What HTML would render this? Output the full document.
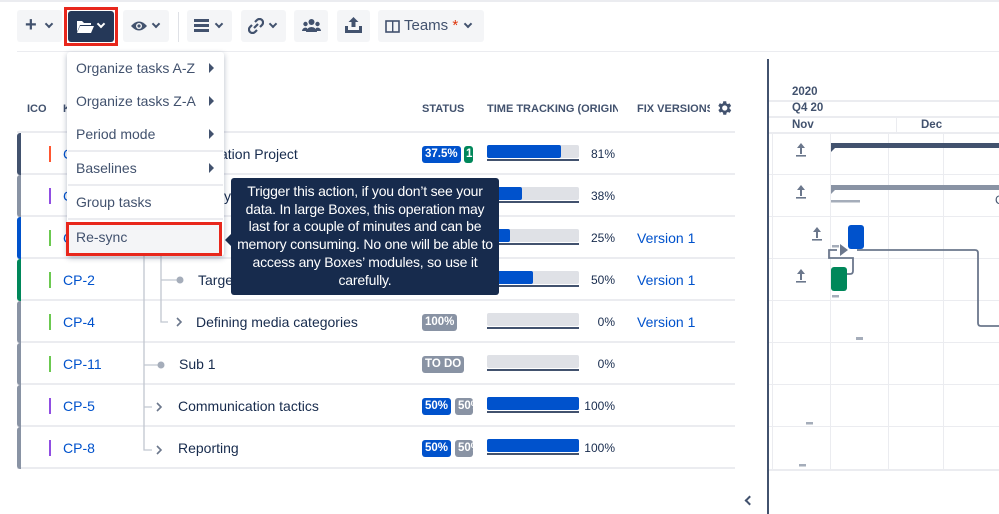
<!DOCTYPE html>
<html><head><meta charset="utf-8"><style>
*{box-sizing:border-box;margin:0;padding:0}
body{width:999px;height:514px;overflow:hidden;background:#fff;font-family:"Liberation Sans",sans-serif;color:#172b4d;position:relative}
.a{position:absolute}
.btn{position:absolute;top:10px;height:32px;background:#f4f5f7;border-radius:3px}
.chev{position:absolute;width:6px;height:6px;border-right:2px solid #42526e;border-bottom:2px solid #42526e;transform:rotate(45deg)}
.hd{position:absolute;top:103px;font-size:11px;font-weight:bold;color:#42526e}
.row{position:absolute;left:17px;width:718px;height:42px;border-bottom:2px solid #ebecf0}
.lb{position:absolute;left:0;top:0;width:4px;height:42px;border-radius:3px 0 0 3px}
.cb{position:absolute;left:32px;top:13px;width:2px;height:16px}
.key{position:absolute;left:46px;top:13px;font-size:14px;color:#0052cc}
.name{position:absolute;top:13px;font-size:14px;color:#172b4d}
.pill{position:absolute;top:13px;height:17px;border-radius:3px;color:#fff;font-size:11.5px;font-weight:bold;padding:2px 3px;overflow:hidden;white-space:nowrap}
.tt{position:absolute;left:470px;top:12px;width:92px;height:16px}
.tt .bg{position:absolute;left:0;top:0;width:92px;height:13px;background:#dfe1e6;border-radius:2px}
.tt .fg{position:absolute;left:0;top:0;height:13px;background:#0052cc;border-radius:2px}
.tt .ul{position:absolute;left:0;top:14px;width:92px;height:2px;background:#42526e}
.pct{position:absolute;top:14px;font-size:12px;color:#172b4d;text-align:right;width:40px;left:558px}
.ver{position:absolute;left:620px;top:13px;font-size:14px;color:#0052cc}
.mi{position:absolute;left:76px;font-size:14px;color:#42526e}
.tri{position:absolute;left:209px;width:0;height:0;border-top:5px solid transparent;border-bottom:5px solid transparent;border-left:5px solid #42526e}
.sep{position:absolute;left:68px;width:155px;height:2px;background:#ebecf0}
.gl{position:absolute;background:#ebecf0}
.gh{position:absolute;font-size:11.5px;font-weight:bold;color:#42526e}
</style></head><body>
<div class="a" style="left:0;top:0;width:999px;height:2px;background:#ebecf0"></div>
<div class="btn" style="left:17px;width:45px"><div class="a" style="left:8px;top:6px;font-size:20px;font-weight:bold;color:#42526e;line-height:18px">+</div><div class="chev" style="left:29px;top:11px"></div></div>
<div class="a" style="left:64px;top:7px;width:54px;height:39px;border:3px solid #e8271c"></div>
<div class="btn" style="left:68px;width:46px;background:#253858;top:11px;height:31px">
<svg class="a" style="left:8px;top:9px" width="18" height="13" viewBox="0 0 18 13"><path d="M1 1h5l2 2h7v2H4L1 12z" fill="#fff"/><path d="M4 6h14l-3 7H1z" fill="#fff"/></svg>
<div class="chev" style="left:30px;top:10px;border-color:#fff"></div></div>
<div class="btn" style="left:123px;width:46px"><svg class="a" style="left:7px;top:10px" width="18" height="12" viewBox="0 0 18 12"><path d="M1 6Q9-3 17 6Q9 15 1 6z" fill="#42526e"/><circle cx="9" cy="6" r="3" fill="#f4f5f7"/><circle cx="9" cy="6" r="1.6" fill="#42526e"/></svg><div class="chev" style="left:30px;top:11px"></div></div>
<div class="a" style="left:178px;top:12px;width:1px;height:30px;background:#dfe1e6"></div>
<div class="btn" style="left:187px;width:45px"><svg class="a" style="left:7px;top:9px" width="15" height="13"><rect x="0" y="0" width="15" height="3" fill="#42526e"/><rect x="0" y="5" width="15" height="3" fill="#42526e"/><rect x="0" y="10" width="15" height="3" fill="#42526e"/></svg><div class="chev" style="left:29px;top:11px"></div></div>
<div class="btn" style="left:241px;width:45px"><svg class="a" style="left:7px;top:8px" width="16" height="16" viewBox="0 0 16 16"><path d="M7 4l2-2a3 3 0 0 1 5 5l-2 2M9 12l-2 2a3 3 0 0 1-5-5l2-2M6 10l4-4" stroke="#42526e" stroke-width="2.2" fill="none"/></svg><div class="chev" style="left:29px;top:11px"></div></div>
<div class="btn" style="left:294px;width:34px"><svg class="a" style="left:8px;top:9px" width="19" height="13"><circle cx="9.5" cy="3" r="3" fill="#42526e"/><circle cx="3.5" cy="5" r="2.2" fill="#42526e"/><circle cx="15.5" cy="5" r="2.2" fill="#42526e"/><path d="M4 13a5.5 5 0 0 1 11 0z" fill="#42526e"/><path d="M0 12a3.5 3.5 0 0 1 5-3v3zM19 12a3.5 3.5 0 0 0-5-3v3z" fill="#42526e"/></svg></div>
<div class="btn" style="left:337px;width:33px"><svg class="a" style="left:8px;top:7px" width="17" height="16" viewBox="0 0 17 16"><path d="M8.5 0l5 5h-3v5h-4V5h-3z" fill="#42526e"/><path d="M0 9h3v4h11V9h3v7H0z" fill="#42526e"/></svg></div>
<div class="btn" style="left:378px;width:106px"><svg class="a" style="left:7px;top:10px" width="15" height="13"><rect x="1" y="1" width="13" height="11" fill="none" stroke="#42526e" stroke-width="1.6"/><rect x="7" y="1" width="1.4" height="11" fill="#42526e"/></svg><div class="a" style="left:26px;top:7px;font-size:15px;color:#42526e">Teams <span style="color:#de350b">*</span></div><div class="chev" style="left:87px;top:11px"></div></div>
<div class="a" style="left:17px;top:51px;width:982px;height:1px;background:#ebecf0"></div>
<div class="hd" style="left:27px">ICO</div><div class="hd" style="left:63px">K</div>
<div class="hd" style="left:422px">STATUS</div>
<div class="hd" style="left:487px;width:131px;overflow:hidden;white-space:nowrap">TIME TRACKING (ORIGINAL</div>
<div class="hd" style="left:637px;width:73px;overflow:hidden;white-space:nowrap">FIX VERSIONS</div>
<svg class="a" style="left:715px;top:99px" width="18" height="18" viewBox="0 0 24 24"><path fill="#42526e" d="M19.4 13a7.5 7.5 0 0 0 0-2l2.1-1.6-2-3.5-2.5 1a7 7 0 0 0-1.7-1L15 3h-4l-.4 2.7a7 7 0 0 0-1.7 1l-2.5-1-2 3.5L6.6 11a7.5 7.5 0 0 0 0 2l-2.1 1.6 2 3.5 2.5-1a7 7 0 0 0 1.7 1L11 21h4l.4-2.7a7 7 0 0 0 1.7-1l2.5 1 2-3.5zM13 15.5a3.5 3.5 0 1 1 0-7 3.5 3.5 0 0 1 0 7z"/></svg>
<div class="a" style="left:17px;top:131px;width:718px;height:2px;background:#ebecf0"></div>
<div class="row" style="top:133px"><div class="lb" style="background:#42526e"></div><div class="cb" style="background:#ff5630"></div><div class="key">C</div><div class="name" style="left:196px">cation Project</div>
<div class="pill" style="left:405px;background:#0052cc">37.5%</div><div class="pill" style="left:447px;width:9px;background:#00875a;padding:2px 2px">1</div>
<div class="tt"><div class="bg"></div><div class="fg" style="width:74px"></div><div class="ul"></div></div><div class="pct">81%</div></div>
<div class="row" style="top:175px"><div class="lb" style="background:#8993a4"></div><div class="cb" style="background:#904ee2"></div><div class="key">C</div><div class="name" style="left:207px">y</div>
<div class="tt"><div class="bg"></div><div class="fg" style="width:35px"></div><div class="ul"></div></div><div class="pct">38%</div></div>
<div class="row" style="top:217px"><div class="lb" style="background:#0052cc"></div><div class="cb" style="background:#6bc950"></div><div class="key">C</div>
<div class="tt"><div class="bg"></div><div class="fg" style="width:23px"></div><div class="ul"></div></div><div class="pct">25%</div><div class="ver">Version 1</div></div>
<div class="row" style="top:259px"><div class="lb" style="background:#00875a"></div><div class="cb" style="background:#6bc950"></div><div class="key">CP-2</div><div class="name" style="left:181px">Targe</div>
<div class="tt"><div class="bg"></div><div class="fg" style="width:46px"></div><div class="ul"></div></div><div class="pct">50%</div><div class="ver">Version 1</div></div>
<div class="row" style="top:301px"><div class="lb" style="background:#8993a4"></div><div class="cb" style="background:#6bc950"></div><div class="key">CP-4</div><div class="name" style="left:179px">Defining media categories</div>
<div class="pill" style="left:405px;background:#8993a4">100%</div>
<div class="tt"><div class="bg"></div><div class="ul"></div></div><div class="pct">0%</div><div class="ver">Version 1</div></div>
<div class="row" style="top:343px"><div class="lb" style="background:#8993a4"></div><div class="cb" style="background:#6bc950"></div><div class="key">CP-11</div><div class="name" style="left:162px">Sub 1</div>
<div class="pill" style="left:405px;background:#8993a4">TO DO</div>
<div class="tt"><div class="bg"></div><div class="ul"></div></div><div class="pct">0%</div></div>
<div class="row" style="top:385px"><div class="lb" style="background:#8993a4"></div><div class="cb" style="background:#904ee2"></div><div class="key">CP-5</div><div class="name" style="left:161px">Communication tactics</div>
<div class="pill" style="left:405px;background:#0052cc">50%</div><div class="pill" style="left:438px;width:18px;background:#8993a4">50%</div>
<div class="tt"><div class="bg"></div><div class="fg" style="width:92px"></div><div class="ul"></div></div><div class="pct">100%</div></div>
<div class="row" style="top:427px"><div class="lb" style="background:#8993a4"></div><div class="cb" style="background:#904ee2"></div><div class="key">CP-8</div><div class="name" style="left:161px">Reporting</div>
<div class="pill" style="left:405px;background:#0052cc">50%</div><div class="pill" style="left:438px;width:18px;background:#8993a4">50%</div>
<div class="tt"><div class="bg"></div><div class="fg" style="width:92px"></div><div class="ul"></div></div><div class="pct">100%</div></div>
<svg class="a" style="left:0;top:0" width="400" height="514"><g stroke="#c1c7d0" stroke-width="1.3" fill="none">
<path d="M144 250V450H152M144 365H158M144 407H152M161 250V322H168M161 280H178"/></g>
<circle cx="161" cy="365" r="3.5" fill="#a5adba"/><circle cx="180" cy="280" r="3.5" fill="#a5adba"/>
<g stroke="#6b778c" stroke-width="1.6" fill="none"><path d="M177 318l4 4-4 4M157 403l4 4-4 4M157 446l4 4-4 4"/></g></svg>
<div class="a" style="left:746px;top:497px;width:7px;height:7px;border-left:2px solid #42526e;border-bottom:2px solid #42526e;transform:rotate(45deg)"></div>
<div class="a" style="left:767px;top:59px;width:2px;height:455px;background:#42526e"></div>
<div class="gh" style="left:792px;top:86px">2020</div>
<div class="gh" style="left:792px;top:102px">Q4 20</div>
<div class="gh" style="left:792px;top:119px">Nov</div>
<div class="gh" style="left:921px;top:119px">Dec</div>
<div class="gl" style="left:769px;top:100px;width:230px;height:2px"></div>
<div class="gl" style="left:769px;top:116px;width:230px;height:2px"></div>
<div class="gl" style="left:769px;top:132px;width:230px;height:2px"></div>
<div class="gl" style="left:896px;top:117px;width:1px;height:16px"></div>
<div class="gl" style="left:772px;top:133px;width:1px;height:337px"></div>
<div class="gl" style="left:830px;top:133px;width:1px;height:337px"></div>
<div class="gl" style="left:888px;top:133px;width:1px;height:337px"></div>
<div class="gl" style="left:943px;top:133px;width:1px;height:337px"></div>
<div class="gl" style="left:769px;top:174px;width:230px;height:1px"></div>
<div class="gl" style="left:769px;top:216px;width:230px;height:1px"></div>
<div class="gl" style="left:769px;top:258px;width:230px;height:1px"></div>
<div class="gl" style="left:769px;top:300px;width:230px;height:1px"></div>
<div class="gl" style="left:769px;top:342px;width:230px;height:1px"></div>
<div class="gl" style="left:769px;top:384px;width:230px;height:1px"></div>
<div class="gl" style="left:769px;top:426px;width:230px;height:1px"></div>
<div class="gl" style="left:769px;top:469px;width:230px;height:2px"></div>
<svg class="a" style="left:769px;top:133px" width="230" height="340">
<g fill="#6b778c"><path d="M32 10l-4 5h3v6h2v-6h3z"/><rect x="27" y="22" width="10" height="1.6"/>
<path d="M32 52l-4 5h3v6h2v-6h3z"/><rect x="27" y="64" width="10" height="1.6"/>
<path d="M48 94l-4 5h3v6h2v-6h3z"/><rect x="43" y="106" width="10" height="1.6"/>
<path d="M32 136l-4 5h3v6h2v-6h3z"/><rect x="27" y="148" width="10" height="1.6"/></g>
<path d="M62 10h168v5H66l-4 4z" fill="#42526e"/>
<path d="M62 52h168v5H66l-4 4z" fill="#8993a4"/>
<rect x="62" y="67" width="29" height="2.5" fill="#a5adba"/>
<path d="M88 117H206q3 0 3 3v70q0 3 3 3h18M68 117h-8v8h24v13q0 3-3 3h-5" stroke="#6b778c" stroke-width="1.8" fill="none"/>
<path d="M71 111l8 6-8 6z" fill="#6b778c"/>
<rect x="79" y="92" width="16" height="24" rx="3" fill="#0052cc"/>
<rect x="62" y="134" width="16" height="24" rx="3" fill="#00875a"/>
<rect x="63" y="112" width="7" height="2.5" fill="#a5adba"/>
<rect x="63" y="162" width="7" height="2.5" fill="#a5adba"/>
<rect x="87" y="204" width="7" height="3" fill="#a5adba"/>
<rect x="37" y="289" width="7" height="2.5" fill="#a5adba"/>
<rect x="30" y="331" width="7" height="2.5" fill="#a5adba"/>
</svg>
<div class="a" style="left:995px;top:193px;font-size:12px;color:#42526e">C</div>
<div class="a" style="left:67px;top:52px;width:157px;height:204px;background:#fff;border-radius:3px;box-shadow:0 2px 6px rgba(9,30,66,.3)"></div>
<div class="mi" style="top:60px">Organize tasks A-Z</div><div class="tri" style="top:63px"></div>
<div class="mi" style="top:93px">Organize tasks Z-A</div><div class="tri" style="top:96px"></div>
<div class="mi" style="top:126px">Period mode</div><div class="tri" style="top:129px"></div>
<div class="sep" style="top:150px"></div>
<div class="mi" style="top:160px">Baselines</div><div class="tri" style="top:163px"></div>
<div class="sep" style="top:184px"></div>
<div class="mi" style="top:194px">Group tasks</div>
<div class="sep" style="top:218px"></div>
<div class="a" style="left:66px;top:222px;width:156px;height:34px;border:3px solid #e8271c;background:#f4f5f7"></div>
<div class="mi" style="top:229px">Re-sync</div>
<div class="a" style="left:225px;top:234px;width:0;height:0;border-top:6px solid transparent;border-bottom:6px solid transparent;border-right:6px solid #172b4d"></div>
<div class="a" style="left:231px;top:178px;width:268px;height:117px;background:#172b4d;border-radius:3px;color:#fff;font-size:14px;line-height:17.7px;text-align:center;padding:5px 2px;white-space:nowrap;letter-spacing:-0.2px">Trigger this action, if you don’t see your<br>data. In large Boxes, this operation may<br>last for a couple of minutes and can be<br>memory consuming. No one will be able to<br>access any Boxes’ modules, so use it<br>carefully.</div>
</body></html>
